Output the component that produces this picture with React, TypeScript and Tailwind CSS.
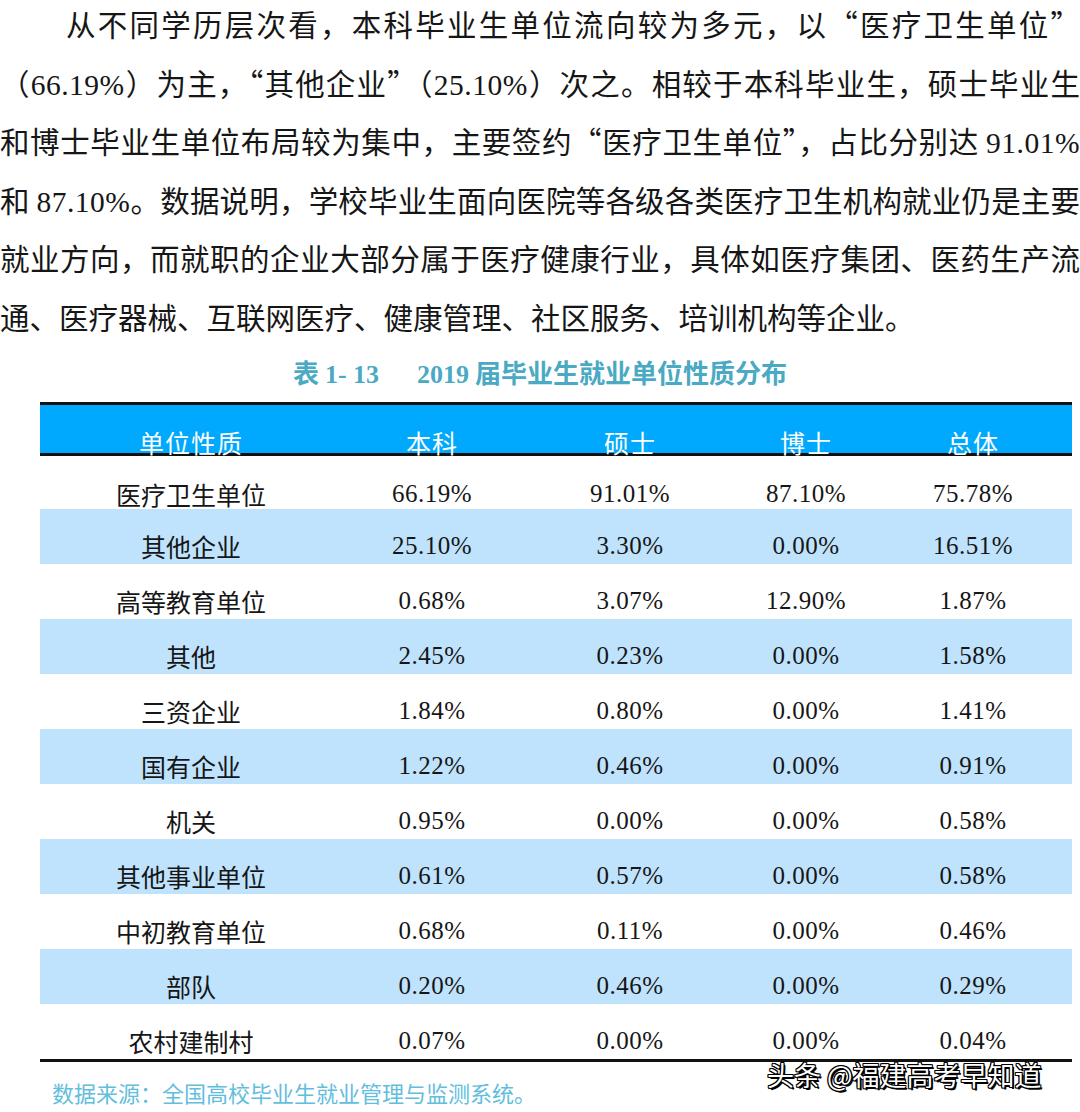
const cjk = "font-['Noto_Sans_CJK_SC',sans-serif]"
const serif = "font-['Liberation_Serif','Noto_Sans_CJK_SC',serif]"

const rows = [
  ['医疗卫生单位', '66.19%', '91.01%', '87.10%', '75.78%'],
  ['其他企业', '25.10%', '3.30%', '0.00%', '16.51%'],
  ['高等教育单位', '0.68%', '3.07%', '12.90%', '1.87%'],
  ['其他', '2.45%', '0.23%', '0.00%', '1.58%'],
  ['三资企业', '1.84%', '0.80%', '0.00%', '1.41%'],
  ['国有企业', '1.22%', '0.46%', '0.00%', '0.91%'],
  ['机关', '0.95%', '0.00%', '0.00%', '0.58%'],
  ['其他事业单位', '0.61%', '0.57%', '0.00%', '0.58%'],
  ['中初教育单位', '0.68%', '0.11%', '0.00%', '0.46%'],
  ['部队', '0.20%', '0.46%', '0.00%', '0.29%'],
  ['农村建制村', '0.07%', '0.00%', '0.00%', '0.04%'],
]

const cols = 'grid grid-cols-[302px_180px_216px_136px_198px]'

function Num({ v }: { v: string }) {
  return <span className={`${serif} tracking-[0.5px]`}>{v}</span>
}

function Line({ children, last = false, indent = false }: { children: React.ReactNode; last?: boolean; indent?: boolean }) {
  return (
    <div
      className={`h-[46px] leading-[46px] whitespace-nowrap ${indent ? 'pl-[66px]' : ''} ${
        last ? 'text-left' : 'text-justify [text-align-last:justify]'
      }`}
    >
      {children}
    </div>
  )
}

export default function App() {
  return (
    <div className={`relative w-[1080px] h-[1112px] overflow-hidden bg-white text-[#161616] ${cjk}`}>
      {/* body text */}
      <div className="flex flex-col gap-[12.6px] text-[29.5px]">
        <Line indent>从不同学历层次看，本科毕业生单位流向较为多元，以“医疗卫生单位”</Line>
        <Line>
          （<Num v="66.19%" />）为主，“其他企业”（<Num v="25.10%" />）次之。相较于本科毕业生，硕士毕业生
        </Line>
        <Line>
          和博士毕业生单位布局较为集中，主要签约“医疗卫生单位”，占比分别达 <Num v="91.01%" />
        </Line>
        <Line>
          和 <Num v="87.10%" />。数据说明，学校毕业生面向医院等各级各类医疗卫生机构就业仍是主要
        </Line>
        <Line>就业方向，而就职的企业大部分属于医疗健康行业，具体如医疗集团、医药生产流</Line>
        <Line last>通、医疗器械、互联网医疗、健康管理、社区服务、培训机构等企业。</Line>
      </div>

      {/* table title */}
      <div className="mt-[18px] h-[30px] leading-[30px] text-center text-[26px] font-bold text-[#4aa9c3]">
        表<span className={`${serif} ml-[6px]`}>1- 13</span>
        <span className={`${serif} ml-[38px]`}>2019</span>
        <span className="ml-[6px]">届毕业生就业单位性质分布</span>
      </div>

      {/* table */}
      <div className="mt-[15px] ml-[40px] w-[1032px] border-t-[3px] border-b-[3px] border-[#111]">
        <div className={`${cols} h-[51px] bg-[#00a9fd] text-white text-[25px] leading-[26px] border-b-[3px] border-[#111]`}>
          {['单位性质', '本科', '硕士', '博士', '总体'].map((h) => (
            <div key={h} className="pt-[24px] text-center tracking-[1px]">
              {h}
            </div>
          ))}
        </div>
        {rows.map((r, ri) => (
          <div
            key={r[0]}
            className={`${cols} ${ri === 0 ? 'h-[53px]' : 'h-[55px]'} ${
              ri % 2 === 1 ? 'bg-[#bfe3fd]' : 'bg-white'
            } text-[25px] leading-[26px] text-[#161616]`}
          >
            {r.map((c, ci) => (
              <div
                key={ci}
                className={`${ri === 0 ? 'pt-[25px]' : 'pt-[24px]'} text-center ${ci > 0 ? `${serif} tracking-[0.5px]` : ''}`}
              >
                {c}
              </div>
            ))}
          </div>
        ))}
      </div>

      {/* source */}
      <div className="mt-[18px] ml-[52px] h-[24px] leading-[24px] text-[22px] text-[#62bedc]">
        数据来源：全国高校毕业生就业管理与监测系统。
      </div>

      {/* watermark */}
      <div className="absolute left-[767px] top-[1060px] text-[27px] leading-[30px] text-white whitespace-nowrap [text-shadow:1px_1px_0_#000,-1px_-1px_0_#000,1px_-1px_0_#000,-1px_1px_0_#000,0_1px_0_#000,1px_0_0_#000,0_-1px_0_#000,-1px_0_0_#000,2px_2px_0_#000]">
        头条 @福建高考早知道
      </div>
    </div>
  )
}
